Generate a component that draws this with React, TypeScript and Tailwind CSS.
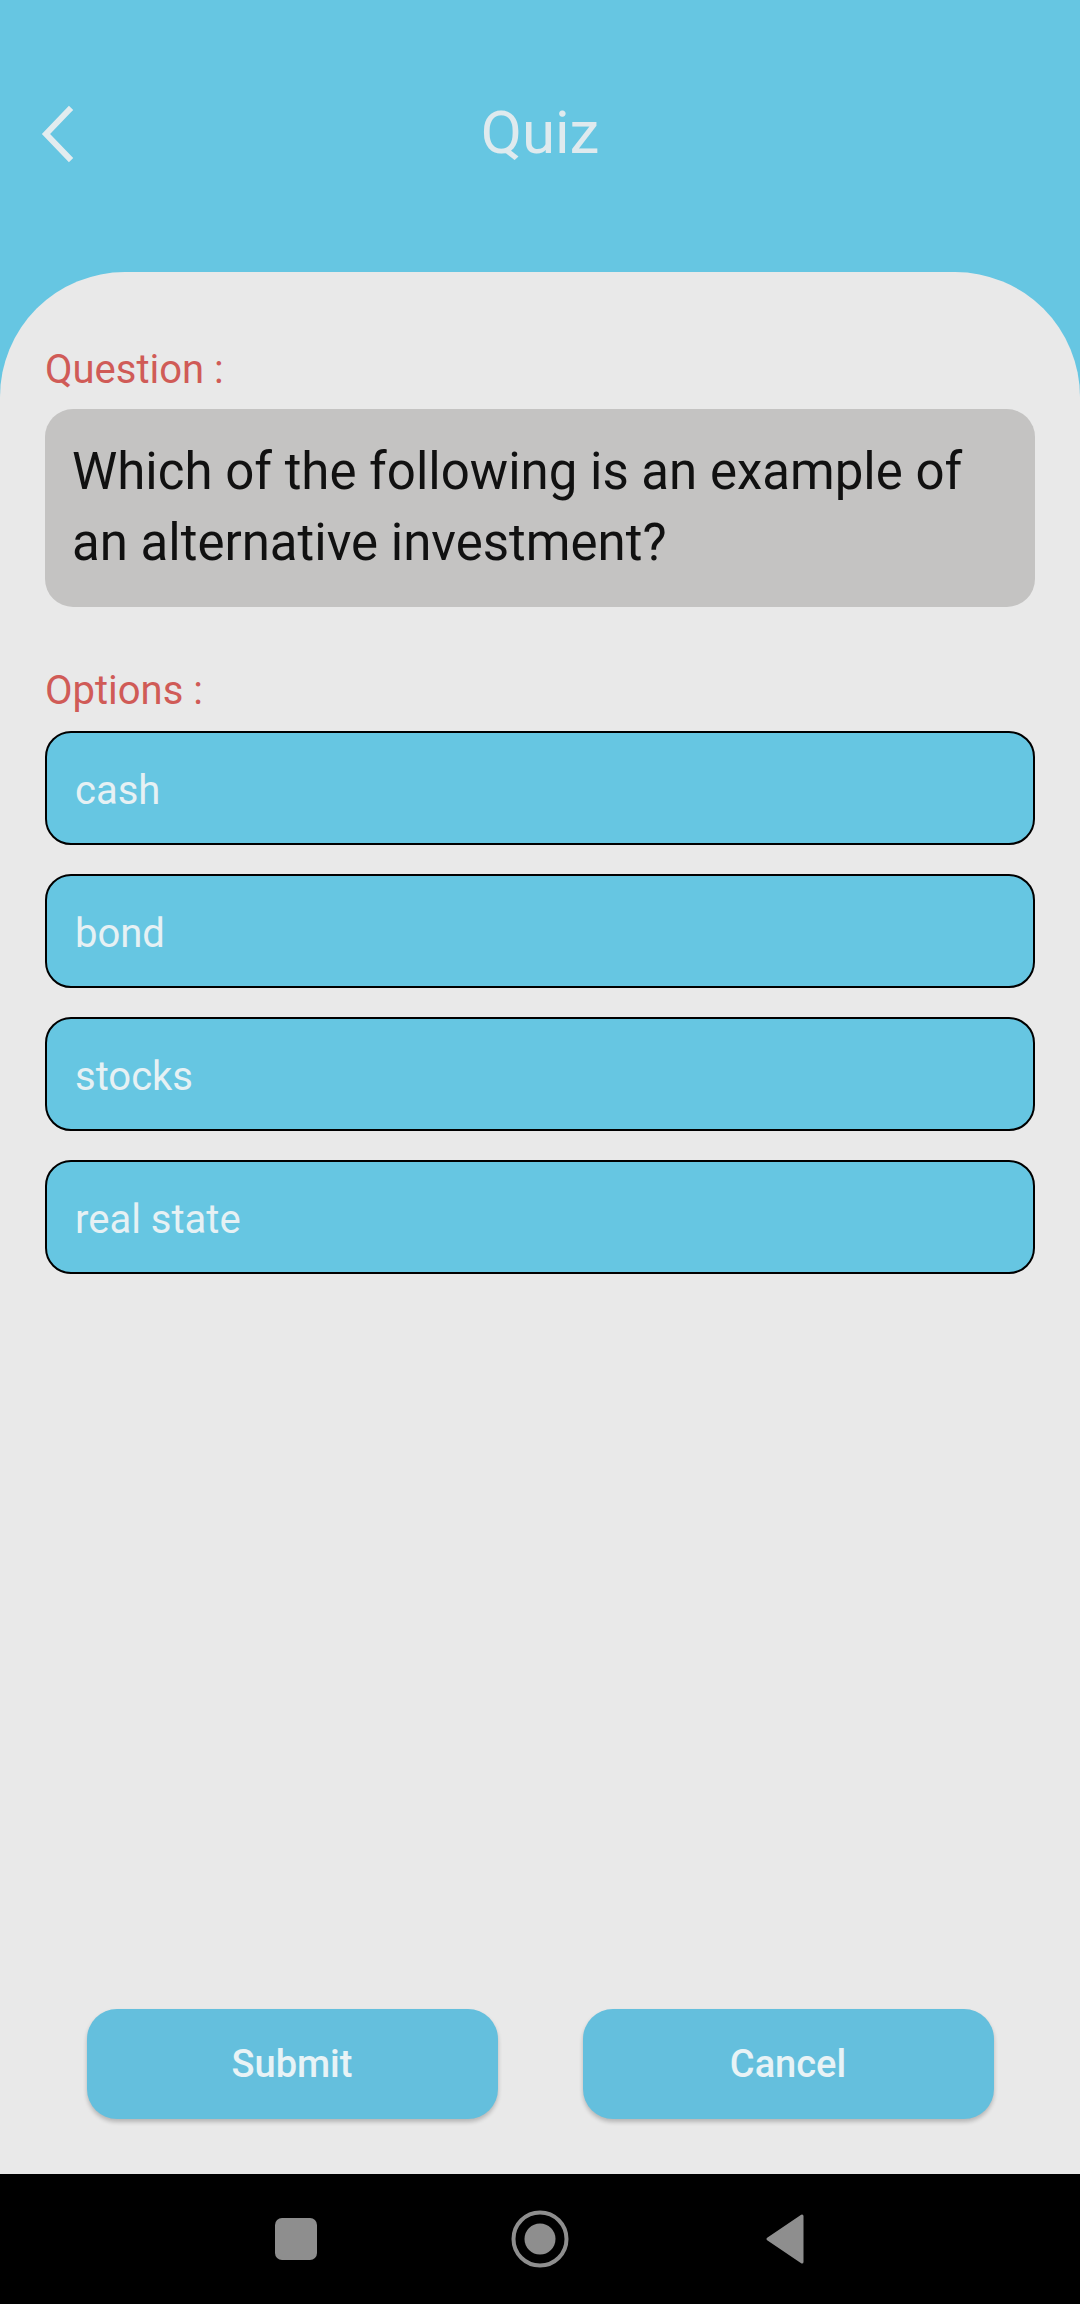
import React from 'react';

const options = ['cash', 'bond', 'stocks', 'real state'];

const BackIcon = () => (
  <svg width="40" height="60" viewBox="0 0 40 60" fill="none">
    <path d="M31 7 L8 31 L31 55" stroke="#e3ecef" strokeWidth="6" strokeLinecap="square" />
  </svg>
);

const NavBar = () => (
  <div className="h-[130px] bg-black flex items-center justify-center gap-[184px]">
    <div className="w-[60px] flex justify-center">
      <div className="w-[42px] h-[42px] rounded-[7px] bg-[#8e8e8e]" />
    </div>
    <div className="w-[60px] flex justify-center">
      <svg width="60" height="60" viewBox="0 0 60 60">
        <circle cx="30" cy="30" r="26.5" fill="none" stroke="#8e8e8e" strokeWidth="4" />
        <circle cx="30" cy="30" r="15.5" fill="#8e8e8e" />
      </svg>
    </div>
    <div className="w-[60px] flex justify-center">
      <svg width="44" height="50" viewBox="0 0 44 50">
        <path d="M40 2 L40 48 L6 25 Z" fill="#8e8e8e" stroke="#8e8e8e" strokeWidth="3" strokeLinejoin="round" />
      </svg>
    </div>
  </div>
);

export default function App() {
  return (
    <div className="w-[1080px] h-[2304px] bg-[#66c6e2] flex flex-col font-['Roboto',sans-serif]">
      {/* Header */}
      <div className="h-[272px] pt-[103px]">
        <div className="grid grid-cols-[1fr_auto_1fr] items-center h-[60px]">
          <div className="pl-[38px] flex items-center">
            <BackIcon />
          </div>
          <h1 className="text-[60px] leading-none text-[#dfeaee]">Quiz</h1>
          <div />
        </div>
      </div>

      {/* Card */}
      <div className="flex-1 flex flex-col bg-[#e9e9e9] rounded-t-[125px] px-[45px] pt-[78px]">
        <p className="text-[40px] leading-none text-[#d05b57] h-[40px]">Question :</p>
        <div className="mt-[19px] bg-[#c4c3c2] rounded-[28px] px-[27px] pt-[27px] pb-[29px]">
          <p className="text-[51px] leading-[71px] text-[#111111]">
            Which of the following is an example of an alternative investment?
          </p>
        </div>

        <p className="mt-[64px] text-[40px] leading-none text-[#d05b57] h-[40px]">Options :</p>
        <div className="mt-[20px] flex flex-col gap-[29px]">
          {options.map((o) => (
            <div
              key={o}
              className="h-[114px] bg-[#66c6e2] border-2 border-black rounded-[26px] pl-[28px] pt-[6px] flex items-center"
            >
              <span className="text-[40px] leading-none text-[#e6f1f4]">{o}</span>
            </div>
          ))}
        </div>

        <div className="mt-auto pb-[55px] flex justify-center gap-[85px]">
          <button className="w-[411px] h-[110px] rounded-[30px] bg-[#64bfdd] shadow-[0_3px_4px_rgba(0,0,0,0.22)] text-[38px] font-medium text-[#e8f3f6]">
            Submit
          </button>
          <button className="w-[411px] h-[110px] rounded-[30px] bg-[#64bfdd] shadow-[0_3px_4px_rgba(0,0,0,0.22)] text-[38px] font-medium text-[#e8f3f6]">
            Cancel
          </button>
        </div>
      </div>

      <NavBar />
    </div>
  );
}
